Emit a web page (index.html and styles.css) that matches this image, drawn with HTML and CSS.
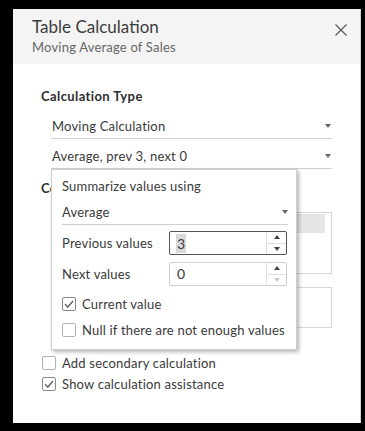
FILE: index.html
```html
<!DOCTYPE html>
<html lang="en">
<head>
    <meta charset="UTF-8">
    <meta name="viewport" content="width=device-width, initial-scale=1.0">
    <title>Table Calculation</title>
    <link rel="stylesheet" href="styles.css">
</head>
<body>

    <div class="dialog">
        <div class="dialog-header">
            <div class="dialog-title">Table Calculation</div>
            <div class="dialog-subtitle">Moving Average of Sales</div>
            <button class="close-button" aria-label="Close">
                <svg width="12" height="12" viewBox="0 0 12 12">
                    <path d="M0.5 0.5 L11.5 11.5 M11.5 0.5 L0.5 11.5" stroke="#555" stroke-width="1.1" fill="none"/>
                </svg>
            </button>
        </div>

        <div class="dialog-body">
            <div class="section-title">Calculation Type</div>
            <div class="dropdown first">
                <span>Moving Calculation</span>
                <span class="caret"></span>
            </div>
            <div class="dropdown">
                <span>Average, prev 3, next 0</span>
                <span class="caret"></span>
            </div>

            <div class="section-title compute">Compute Using</div>
            <div class="list-box">
                <div class="list-row selected"></div>
            </div>
            <div class="list-box small"></div>

            <div class="check-list">
                <label class="check-row">
                    <span class="checkbox"></span>
                    <span>Add secondary calculation</span>
                </label>
                <label class="check-row">
                    <span class="checkbox checked">
                        <svg width="10" height="8" viewBox="0 0 10 8"><path d="M1 4.2 L3.8 7 L9 1" stroke="#555" stroke-width="1.2" fill="none"/></svg>
                    </span>
                    <span>Show calculation assistance</span>
                </label>
            </div>
        </div>

        <!-- edit popup for the second dropdown -->
        <div class="popup">
            <div class="popup-label">Summarize values using</div>
            <div class="dropdown popup-dropdown">
                <span>Average</span>
                <span class="caret"></span>
            </div>

            <div class="field-row">
                <span class="field-label">Previous values</span>
                <div class="spin-input focused">
                    <span class="spin-value"><span class="selected-text">3</span></span>
                    <div class="spin-buttons">
                        <span class="spin-up"></span>
                        <span class="spin-down"></span>
                    </div>
                </div>
            </div>
            <div class="field-row">
                <span class="field-label">Next values</span>
                <div class="spin-input">
                    <span class="spin-value">0</span>
                    <div class="spin-buttons">
                        <span class="spin-up"></span>
                        <span class="spin-down disabled"></span>
                    </div>
                </div>
            </div>

            <div class="popup-checks">
                <label class="check-row">
                    <span class="checkbox checked">
                        <svg width="10" height="8" viewBox="0 0 10 8"><path d="M1 4.2 L3.8 7 L9 1" stroke="#555" stroke-width="1.2" fill="none"/></svg>
                    </span>
                    <span>Current value</span>
                </label>
                <label class="check-row">
                    <span class="checkbox"></span>
                    <span>Null if there are not enough values</span>
                </label>
            </div>
        </div>
    </div>

</body>
</html>
```

FILE: styles.css
```css
:root {
    --text-color: #3a3a3a;
    --muted-color: #666;
    --line-color: #cfcfcf;
    --header-color: #f4f4f4;
}

body {
    margin: 0;
    background-color: #000;
    font-family: 'Lato', sans-serif;
    font-size: 13px;
    line-height: 16px;
    letter-spacing: 0.2px;
    color: var(--text-color);
}

.dialog {
    position: relative;
    box-sizing: border-box;
    margin: 9px 0 0 13px;
    width: 348px;
    height: 414px;
    background-color: #fff;
    border-right: 1px solid #d4d4d4;
}

.dialog-header {
    position: relative;
    box-sizing: border-box;
    height: 55px;
    padding: 8px 0 0 19px;
    background-color: var(--header-color);
}

.dialog-title {
    font-size: 17px;
    line-height: 20px;
    letter-spacing: 0;
    color: #3c3c3c;
}

.dialog-subtitle {
    margin-top: 2px;
    color: var(--muted-color);
}

.close-button {
    position: absolute;
    top: 15px;
    right: 13px;
    padding: 0;
    border: none;
    background: none;
    display: flex;
}

.dialog-body {
    padding: 24px 28px 0 28px;
}

.section-title {
    font-weight: bold;
    letter-spacing: 0.4px;
    color: #2e2e2e;
}

.section-title.compute {
    margin-top: 11px;
}

.dropdown {
    display: flex;
    justify-content: space-between;
    align-items: center;
    margin-left: 10px;
    padding: 6px 1px 4px 1px;
    border-bottom: 1px solid var(--line-color);
}

.dropdown.first {
    margin-top: 8px;
    margin-bottom: 3px;
}

.caret {
    width: 0;
    height: 0;
    border-left: 3px solid transparent;
    border-right: 3px solid transparent;
    border-top: 4px solid #666;
}

.list-box {
    box-sizing: border-box;
    margin: 16px 0 0 10px;
    height: 62px;
    padding: 1px 6px 0 0;
    border: 1px solid #d6d6d6;
}

.list-box.small {
    margin-top: 13px;
    height: 41px;
}

.list-row.selected {
    height: 19px;
    background-color: #e6e6e6;
}

.check-list {
    display: flex;
    flex-direction: column;
    gap: 7px;
    margin-top: 28px;
    margin-left: 1px;
}

.check-row {
    display: flex;
    align-items: center;
    gap: 6px;
    height: 14px;
}

.checkbox {
    box-sizing: border-box;
    width: 14px;
    height: 14px;
    border: 1px solid #b3b3b3;
    border-radius: 2px;
    background-color: #fff;
    display: flex;
    align-items: center;
    justify-content: center;
}

.checkbox.checked {
    border-color: #8a8a8a;
}

.popup {
    position: absolute;
    left: 38px;
    top: 160px;
    box-sizing: border-box;
    width: 246px;
    height: 181px;
    padding: 8px 8px 0 10px;
    background-color: #fff;
    border: 1px solid #cfcfcf;
    box-shadow: 2px 2px 4px rgba(0, 0, 0, 0.3);
}

.popup-dropdown {
    margin: 4px 0 0 0;
    padding-right: 0;
    padding-left: 0;
}

.field-row {
    display: flex;
    align-items: center;
    margin-top: 6px;
}

.field-row + .field-row {
    margin-top: 7px;
}

.field-label {
    width: 107px;
}

.spin-input {
    box-sizing: border-box;
    display: flex;
    width: 118px;
    height: 24px;
    border: 1px solid #cfcfcf;
    border-radius: 2px;
}

.spin-input.focused {
    border-color: #555;
}

.spin-value {
    flex: 1;
    display: flex;
    align-items: center;
    padding-left: 7px;
    font-size: 14px;
}

.selected-text {
    background-color: #d9d9d9;
    line-height: 19px;
    padding: 0 1px;
    margin-left: -1px;
}

.spin-buttons {
    width: 19px;
    display: flex;
    flex-direction: column;
    border-left: 1px solid #e0e0e0;
}

.spin-up,
.spin-down {
    flex: 1;
    display: flex;
    align-items: center;
    justify-content: center;
}

.spin-up {
    border-bottom: 1px solid #e0e0e0;
}

.spin-up::after {
    content: "";
    border-left: 3.5px solid transparent;
    border-right: 3.5px solid transparent;
    border-bottom: 4px solid #444;
}

.spin-down::after {
    content: "";
    border-left: 3.5px solid transparent;
    border-right: 3.5px solid transparent;
    border-top: 4px solid #444;
}

.spin-down.disabled::after {
    border-top-color: #ccc;
}

.popup-checks {
    display: flex;
    flex-direction: column;
    gap: 12px;
    margin-top: 11px;
}
```
